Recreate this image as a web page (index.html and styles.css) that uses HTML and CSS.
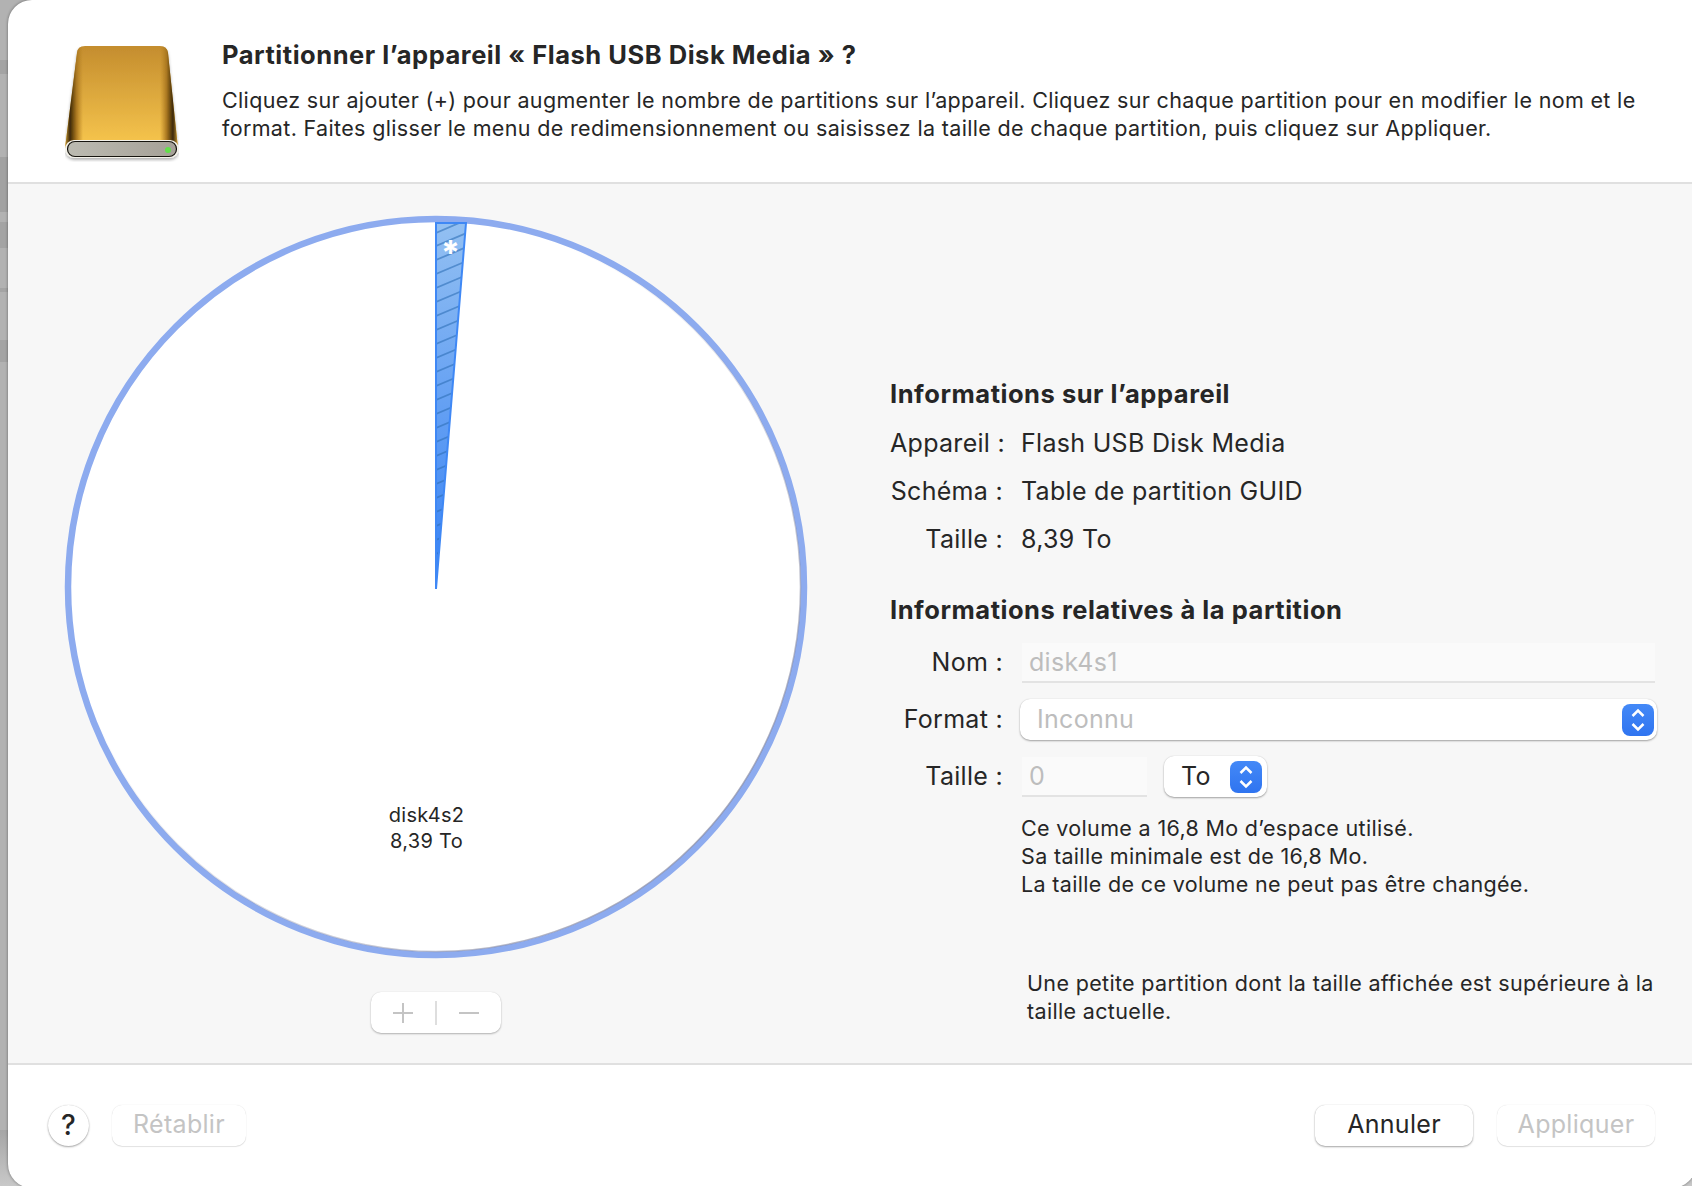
FILE: index.html
```html
<!DOCTYPE html>
<html lang="fr">
<head>
<meta charset="utf-8">
<title>Partitionner</title>
<link rel="stylesheet" href="styles.css">
</head>
<body>
<div class="backdrop" aria-hidden="true">
  <span class="bd-block"></span>
  <span class="bd-bottom"></span>
  <span class="bd-mark m1"></span>
  <span class="bd-mark m2"></span>
  <span class="bd-mark m3"></span>
  <span class="bd-mark m4"></span>
</div>
<main class="window">
  <header class="head">
    <svg class="disk" width="114" height="116" viewBox="0 0 114 116" aria-hidden="true">
      <defs>
        <linearGradient id="dbody" x1="0" y1="0" x2="0" y2="1">
          <stop offset="0" stop-color="#c48d2e"/><stop offset="1" stop-color="#f8c74e"/>
        </linearGradient>
        <linearGradient id="dedge" x1="0" y1="0" x2="1" y2="0">
          <stop offset="0" stop-color="#c99a38"/><stop offset=".045" stop-color="#3d2906"/><stop offset=".1" stop-color="#a87620"/><stop offset=".16" stop-color="#b98426" stop-opacity="0"/>
          <stop offset=".84" stop-color="#b98426" stop-opacity="0"/><stop offset=".9" stop-color="#a87620"/><stop offset=".955" stop-color="#3d2906"/><stop offset="1" stop-color="#c99a38"/>
        </linearGradient>
        <linearGradient id="dbar" x1="0" y1="0" x2="1" y2="0">
          <stop offset="0" stop-color="#bcbbb1"/><stop offset="1" stop-color="#a5a097"/>
        </linearGradient>
        <filter id="dshadow" x="-10%" y="-10%" width="120%" height="120%"><feDropShadow dx="0" dy="2" stdDeviation="1.500" flood-color="#000" flood-opacity=".3"/></filter>
      </defs>
      <g filter="url(#dshadow)">
        <path d="M12 7Q12.500 0 20 0H95Q102 0 103 7L113 102H0Z" fill="url(#dbody)"/>
        <path d="M12 7Q12.500 0 20 0H95Q102 0 103 7L113 102H0Z" fill="url(#dedge)"/>
        <rect x="0" y="94" width="114" height="18" rx="9" fill="#f4f2ea"/>
      </g>
      <rect x="2.500" y="95.500" width="109" height="15" rx="7.500" fill="url(#dbar)" stroke="#17150f" stroke-width="1.200"/>
      <circle cx="103" cy="104" r="3" fill="#62e04a"/>
    </svg>
    <div class="head-text">
      <h1 class="title">Partitionner l’appareil « Flash USB Disk Media » ?</h1>
      <p class="intro">Cliquez sur ajouter (+) pour augmenter le nombre de partitions sur l’appareil. Cliquez sur chaque partition pour en modifier le nom et le<br>format. Faites glisser le menu de redimensionnement ou saisissez la taille de chaque partition, puis cliquez sur Appliquer.</p>
    </div>
  </header>

  <section class="middle">
    <div class="left">
      <div class="pie-wrap">
        <svg class="pie" width="744" height="744" viewBox="0 0 744 744" aria-hidden="true">
          <defs>
            <linearGradient id="wedge" x1="0" y1="0" x2="0" y2="1">
              <stop offset="0" stop-color="#93c0f2"/><stop offset="1" stop-color="#3580f4"/>
            </linearGradient>
            <linearGradient id="rimshade" x1="0" y1="0" x2="1" y2="1">
              <stop offset=".35" stop-color="#8a8fa8" stop-opacity="0"/><stop offset="1" stop-color="#6f7390" stop-opacity=".8"/>
            </linearGradient>
            <clipPath id="wclip"><path d="M372 374V8H402Z"/></clipPath>
          </defs>
          <circle cx="372" cy="372" r="368" fill="#fff" stroke="#8dabef" stroke-width="6.500"/>
          <circle cx="372" cy="372" r="364.500" fill="none" stroke="url(#rimshade)" stroke-width="1.500"/>
          <path d="M372 374V8H402Z" fill="url(#wedge)"/>
          <g clip-path="url(#wclip)" stroke="#2f6fb8" stroke-opacity=".6" stroke-width="1.800">
            <path d="M372 18L402 5M372 31L405 17M372 45L405 31M372 59L405 45M372 73L405 59M372 87L405 73M372 101L405 87M372 115L405 101M372 129L405 115M372 143L405 129M372 157L405 143M372 171L405 157M372 185L405 171M372 199L405 185M372 213L405 199M372 227L405 213M372 241L405 227M372 255L405 241M372 269L405 255M372 283L405 269M372 297L405 283M372 311L405 297M372 325L405 311M372 339L405 325"/>
          </g>
          <path d="M372 374V8H402Z" fill="none" stroke="#3f88f5" stroke-width="2"/>
        </svg>
        <span class="star">*</span>
        <div class="pie-label">disk4s2<br>8,39 To</div>
      </div>
      <div class="addrem">
        <span class="addrem-btn">
          <svg width="22" height="22" viewBox="0 0 22 22" aria-hidden="true"><path d="M11 1V21M1 11H21" stroke="#c4c4c4" stroke-width="2"/></svg>
        </span>
        <span class="addrem-sep"></span>
        <span class="addrem-btn">
          <svg width="22" height="22" viewBox="0 0 22 22" aria-hidden="true"><path d="M1 11H21" stroke="#c4c4c4" stroke-width="2"/></svg>
        </span>
      </div>
    </div>

    <div class="right">
      <h2 class="sec first">Informations sur l’appareil</h2>
      <dl class="info">
        <dt>Appareil :</dt><dd>Flash USB Disk Media</dd>
        <dt>Schéma :</dt><dd>Table de partition GUID</dd>
        <dt>Taille :</dt><dd>8,39 To</dd>
      </dl>
      <h2 class="sec second">Informations relatives à la partition</h2>
      <div class="form">
        <span class="flabel">Nom :</span>
        <div class="field wide">disk4s1</div>
        <span class="flabel">Format :</span>
        <div class="select wide-select">
          <span class="select-text">Inconnu</span>
          <span class="stepper">
            <svg width="16" height="24" viewBox="0 0 16 24" aria-hidden="true"><path d="M2.500 8L8 2.500L13.500 8M2.500 16L8 21.500L13.500 16" fill="none" stroke="#fff" stroke-width="2.500"/></svg>
          </span>
        </div>
        <span class="flabel">Taille :</span>
        <div class="size-row">
          <div class="field small">0</div>
          <div class="select unit">
            <span class="unit-text">To</span>
            <span class="stepper">
              <svg width="16" height="24" viewBox="0 0 16 24" aria-hidden="true"><path d="M2.500 8L8 2.500L13.500 8M2.500 16L8 21.500L13.500 16" fill="none" stroke="#fff" stroke-width="2.500"/></svg>
            </span>
          </div>
        </div>
      </div>
      <p class="notes">Ce volume a 16,8 Mo d’espace utilisé.<br>Sa taille minimale est de 16,8 Mo.<br>La taille de ce volume ne peut pas être changée.</p>
      <p class="warn">Une petite partition dont la taille affichée est supérieure à la<br>taille actuelle.</p>
    </div>
  </section>

  <footer class="foot">
    <button class="help" type="button">?</button>
    <button class="btn reset" type="button" disabled>Rétablir</button>
    <span class="spacer"></span>
    <button class="btn action" type="button">Annuler</button>
    <button class="btn action" type="button" disabled>Appliquer</button>
  </footer>
</main>
</body>
</html>
```
FILE: styles.css
```css
* { box-sizing: border-box; }
html, body { margin: 0; height: 1186px; overflow: hidden; }
body {
  position: relative;
  background: #b2b2b2;
  font-family: Inter, "Liberation Sans", sans-serif;
  color: #262626;
  padding-left: 8px;
}
.backdrop { position: absolute; inset: 0; overflow: hidden; }
.bd-block { position: absolute; left: 0; top: 157px; width: 8px; height: 55px; background: #a2a2a2; }
.bd-bottom { position: absolute; left: 0; top: 1130px; width: 100%; height: 56px; background: linear-gradient(#a6a6a6, #c8c8c8); }
.bd-mark { position: absolute; left: 0; width: 8px; background: #a4a4a4; }
.m1 { top: 60px; height: 14px; }
.m2 { top: 222px; height: 26px; }
.m3 { top: 288px; height: 4px; }
.m4 { top: 340px; height: 22px; }
.window {
  position: relative;
  width: 1688px; height: 1188px;
  background: #fff;
  border-radius: 24px;
  border-top-right-radius: 0;
  box-shadow: 0 0 3px rgba(0,0,0,.45);
  display: flex; flex-direction: column;
  overflow: hidden;
}
.head {
  height: 184px; flex: none;
  border-bottom: 2px solid #e0e0e0;
  display: flex; align-items: flex-start;
  padding: 46px 0 0 57px;
}
.disk { flex: none; margin-right: 43px; }
.head-text { margin-top: -7px; }
.title { margin: 0; font-size: 25.500px; line-height: 32px; font-weight: 700; letter-spacing: .53px; }
.intro { margin: 15px 0 0; font-size: 21.500px; line-height: 28px; letter-spacing: .34px; white-space: nowrap; }
.middle {
  height: 881px; flex: none;
  background: #f7f7f7;
  border-bottom: 2px solid #e0e0e0;
  display: flex;
}
.left { width: 882px; flex: none; padding: 31px 0 0 56px; }
.pie-wrap { position: relative; width: 744px; height: 744px; }
.pie { display: block; }
.star { position: absolute; left: 377px; top: 18px; color: #fff; font-size: 34px; font-weight: 700; line-height: 40px; }
.pie-label { position: absolute; left: 0; width: 725px; top: 587px; text-align: center; font-size: 20px; line-height: 26px; letter-spacing: .3px; }
.addrem {
  margin: 33px 0 0 307px;
  width: 130px; height: 41px;
  background: #fff; border-radius: 10px;
  box-shadow: 0 1px 2px rgba(0,0,0,.28), 0 0 1px rgba(0,0,0,.12);
  display: flex; align-items: center; justify-content: center;
}
.addrem-btn { width: 64px; display: flex; justify-content: center; }
.addrem-sep { width: 2px; height: 24px; background: #dedede; flex: none; }
.addrem-btn svg { display: block; }
.right { flex: 1; padding-right: 41px; }
.sec { margin: 0; font-size: 25.500px; font-weight: 700; line-height: 32px; letter-spacing: .53px; }
.sec.first { padding-top: 194px; }
.info {
  margin: 0;
  display: grid; grid-template-columns: 113px 1fr;
  column-gap: 18px; row-gap: 16px;
  padding-top: 17px;
  font-size: 25px; line-height: 32px; letter-spacing: .3px;
}
.info dt { text-align: right; white-space: nowrap; }
.info dd { margin: 0; }
.sec.second { margin-top: 39px; }
.form {
  margin-top: 17px;
  display: grid; grid-template-columns: 113px 1fr;
  column-gap: 18px; row-gap: 16px;
  font-size: 25px; letter-spacing: .3px; align-items: center;
}
.flabel { text-align: right; line-height: 32px; padding-bottom: 2px; white-space: nowrap; }
.field {
  height: 40px; background: #fafafa;
  border-bottom: 2px solid #e3e3e3;
  color: #bdbdbd; line-height: 38px; padding-left: 7px;
  margin-left: 1px;
}
.select {
  background: #fff; border-radius: 10px;
  box-shadow: 0 1px 2px rgba(0,0,0,.34), 0 0 1px rgba(0,0,0,.16);
  display: flex; align-items: center;
}
.wide-select { height: 41px; margin-left: -1px; margin-right: -2px; padding-left: 17px; padding-right: 3px; }
.select-text { flex: 1; color: #bdbdbd; padding-bottom: 2px; }
.stepper {
  width: 32px; height: 32px; border-radius: 8px;
  background: linear-gradient(#4489f7, #2f74f0);
  display: flex; align-items: center; justify-content: center; flex: none;
}
.size-row { display: flex; gap: 17px; align-items: center; }
.field.small { width: 125px; }
.unit { width: 103px; height: 41px; padding: 0 5px 0 17px; }
.unit-text { flex: 1; padding-bottom: 2px; }
.notes { margin: 17px 0 0 131px; font-size: 21.500px; line-height: 28px; letter-spacing: .34px; }
.warn { margin: 71px 0 0 137px; font-size: 21.500px; line-height: 28px; letter-spacing: .34px; }
.foot {
  flex: 1; display: flex; align-items: flex-start;
  padding: 40px 41px 0 40px;
}
.help {
  width: 41px; height: 41px; border-radius: 50%;
  border: 0; padding: 0 0 2px; background: #fff; color: #262626;
  font: 500 28px Inter, "Liberation Sans", sans-serif;
  box-shadow: 0 1px 2px rgba(0,0,0,.34), 0 0 1px rgba(0,0,0,.2);
  margin-right: 23px;
}
.btn {
  height: 41px; border: 0; padding: 0 0 3px; background: #fff; border-radius: 10px;
  font: 400 25px Inter, "Liberation Sans", sans-serif; letter-spacing: .3px; color: #262626;
  box-shadow: 0 1px 2px rgba(0,0,0,.34), 0 0 1px rgba(0,0,0,.2);
}
.btn:disabled { color: #c4c4c4; box-shadow: 0 1px 1px rgba(0,0,0,.1), 0 0 1px rgba(0,0,0,.16); }
.reset { width: 134px; }
.action { width: 158px; margin-left: 24px; }
.spacer { flex: 1; }
```
